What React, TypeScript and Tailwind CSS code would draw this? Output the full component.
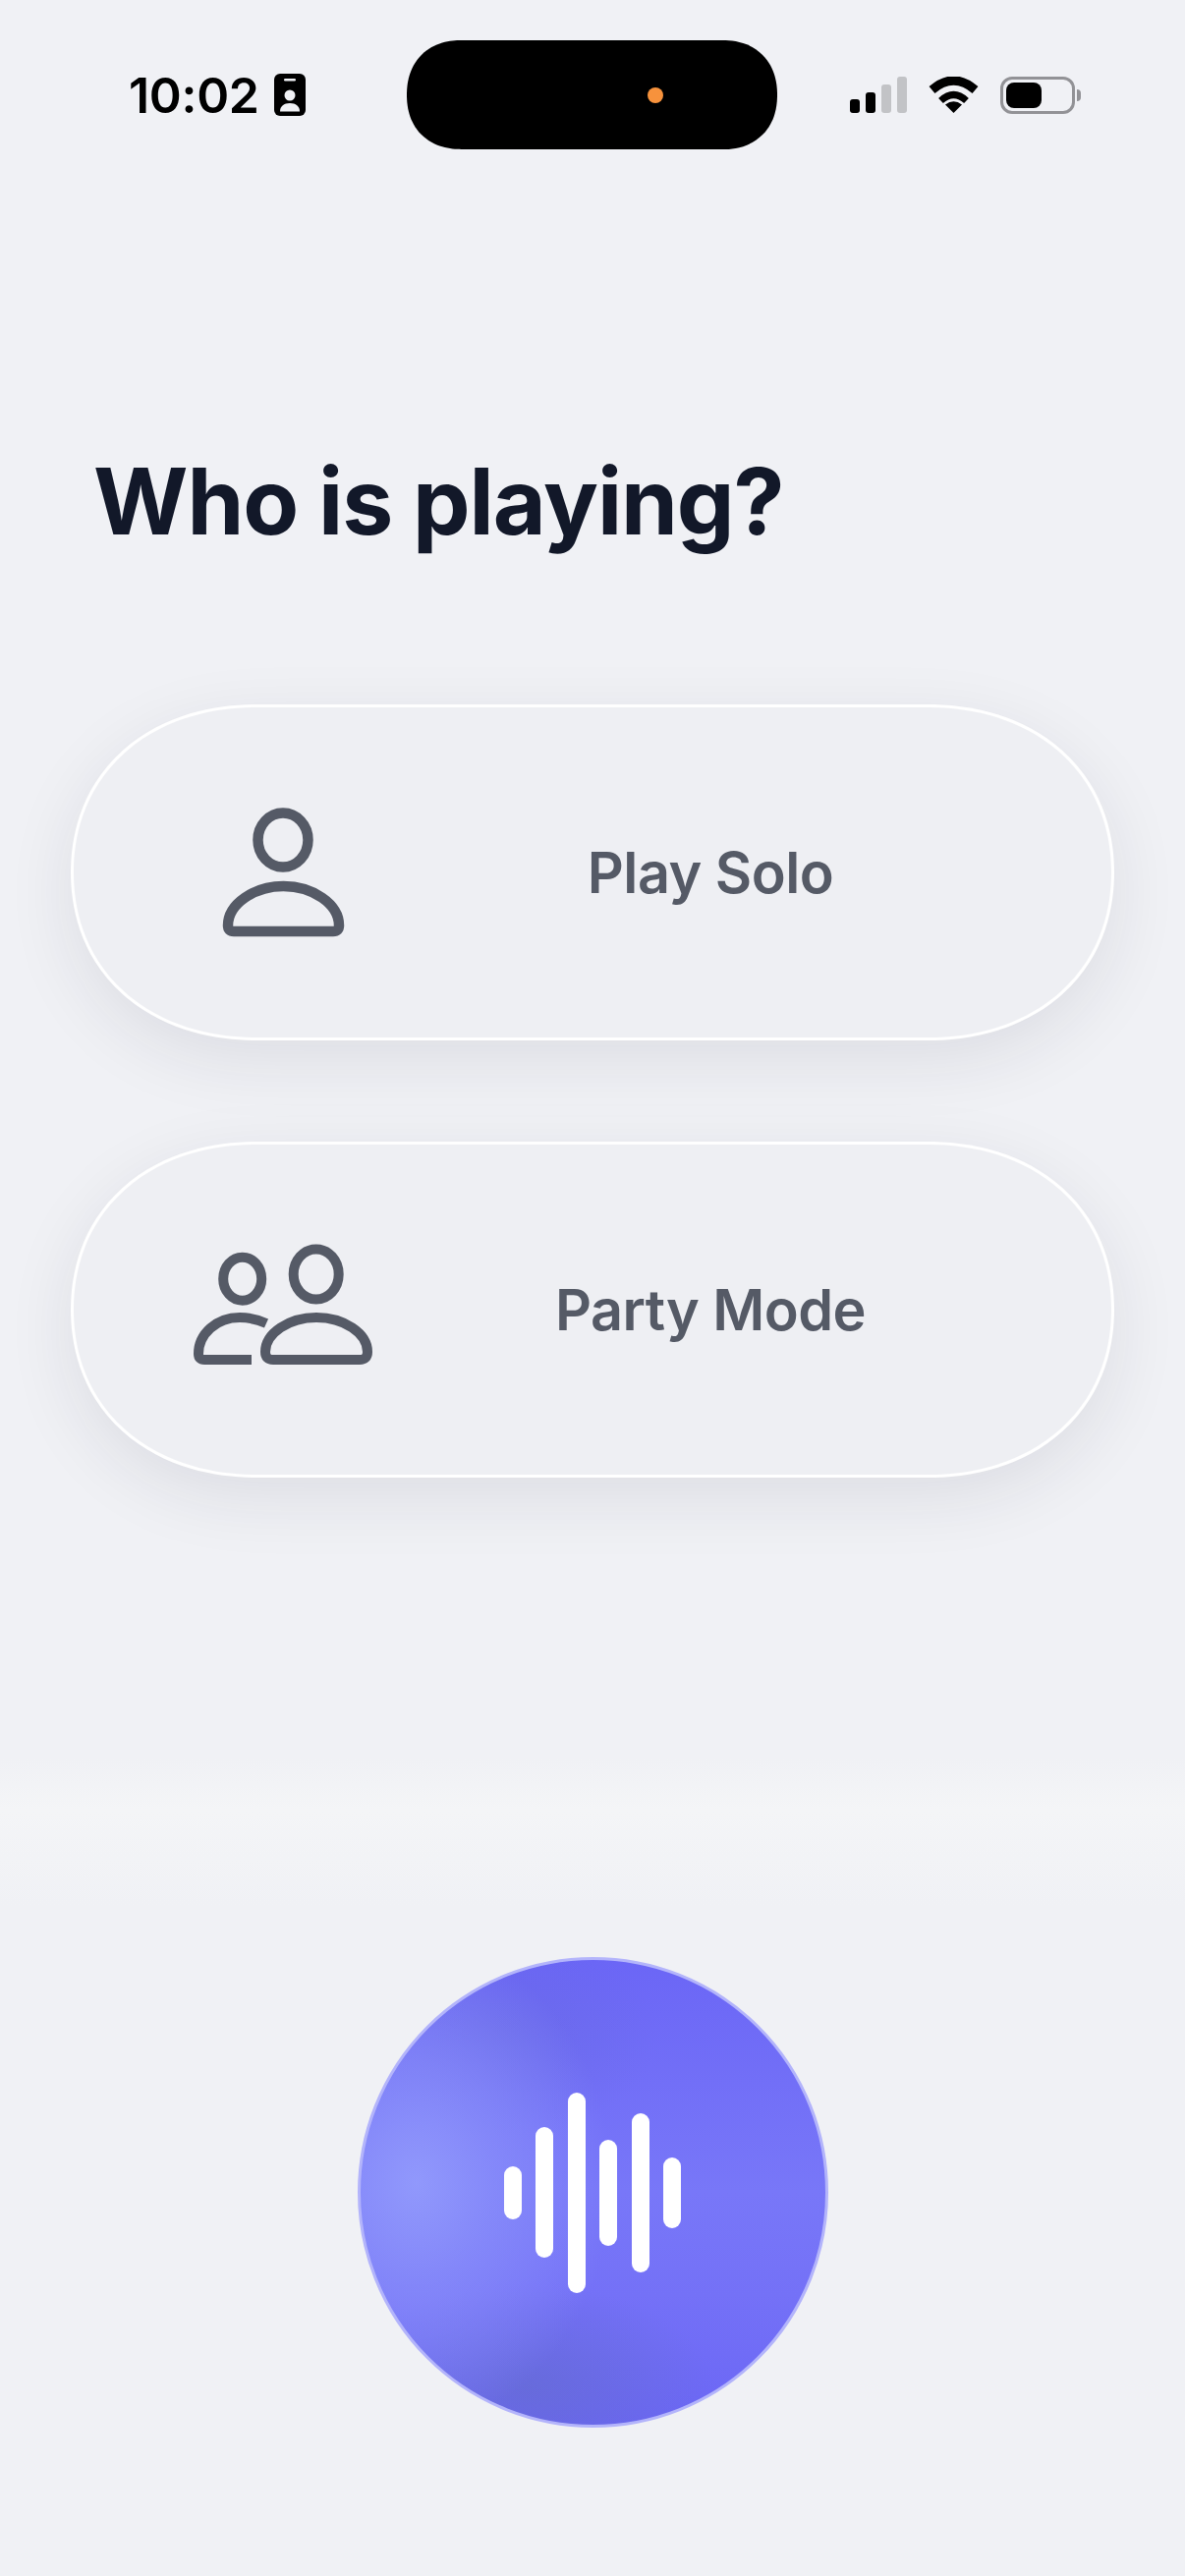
const bars = [54, 133, 204, 108, 162, 72];
const heightClass: Record<number, string> = {
  54: "h-[54px]",
  133: "h-[133px]",
  204: "h-[204px]",
  108: "h-[108px]",
  162: "h-[162px]",
  72: "h-[72px]",
};

function SoloIcon() {
  return (
    <svg width="130" height="140" viewBox="0 0 130 140" fill="none" stroke="#555a66" strokeWidth="10.5" strokeLinejoin="round">
      <ellipse cx="65" cy="37" rx="25.5" ry="27.5" />
      <path d="M15 130H116Q122 130 122 124C122 102 95 84 65.5 84C36 84 9 102 9 124Q9 130 15 130Z" />
    </svg>
  );
}

function PartyIcon() {
  return (
    <svg width="196" height="145" viewBox="0 0 196 145" fill="none" stroke="#555a66" strokeWidth="10" strokeLinejoin="round">
      <ellipse cx="56.7" cy="40.7" rx="19.5" ry="22" />
      <ellipse cx="131.7" cy="36" rx="23" ry="25.5" />
      <path d="M81 86C72 82 64 80 54 80C30 80 12 97 12 117Q12 123 18 123H66" />
      <path d="M88 123H176Q184 123 184 115C184 96 160 80 132 80C104 80 80 96 80 115Q80 123 88 123Z" />
    </svg>
  );
}

function IdBadge() {
  return (
    <svg width="32" height="43" viewBox="0 0 32 43" className="ml-[15px]">
      <rect width="32" height="43" rx="6" fill="#000" />
      <rect x="10" y="5" width="12" height="2.5" rx="1.2" fill="#f0f1f5" />
      <circle cx="16" cy="22" r="5.5" fill="#f0f1f5" />
      <path d="M6 38.5C6 33 10 30 16 30C22 30 26 33 26 38.5Z" fill="#f0f1f5" />
    </svg>
  );
}

function Signal() {
  return (
    <div className="flex items-end gap-[6px] h-[37px]">
      <div className="w-[10px] h-[14px] rounded-[3px] bg-black" />
      <div className="w-[10px] h-[21px] rounded-[3px] bg-black" />
      <div className="w-[10px] h-[29px] rounded-[3px] bg-[#c2c3c6]" />
      <div className="w-[10px] h-[37px] rounded-[3px] bg-[#c2c3c6]" />
    </div>
  );
}

function Wifi() {
  return (
    <svg width="51" height="37" viewBox="0 0 51 37" fill="none" className="ml-[22px]">
      <path d="M3.5 13.5Q25.5 -5.5 47.5 13.5" stroke="#000" strokeWidth="9" />
      <path d="M12.5 24.5Q25.5 12.5 38.5 24.5" stroke="#000" strokeWidth="7" />
      <path d="M25.5 37L17 28.5Q25.5 22 34 28.5Z" fill="#000" />
    </svg>
  );
}

function Battery() {
  return (
    <div className="flex items-center ml-[22px]">
      <div className="w-[76px] h-[38px] rounded-[12px] border-[3px] border-[#929296] p-[3px]">
        <div className="w-[36px] h-full rounded-[8px] bg-black" />
      </div>
      <div className="ml-[2px] w-[4px] h-[12px] rounded-r-[4px] bg-[#929296]" />
    </div>
  );
}

function ModeCard({ icon, label }: { icon: React.ReactNode; label: string }) {
  return (
    <button className="flex items-center w-full h-[342px] px-[93px] rounded-[190px/171px] [corner-shape:superellipse(1.1)] bg-[#eeeff3] border-[3px] border-white/95 shadow-[0_20px_70px_rgba(30,35,60,0.09)]">
      <div className="w-[240px] flex justify-center shrink-0">{icon}</div>
      <span className="flex-1 text-center text-[57.5px] leading-[68px] font-semibold tracking-[-0.5px] text-[#555a66]">{label}</span>
    </button>
  );
}

export default function App() {
  return (
    <div className="relative w-[1206px] h-[2622px] overflow-hidden bg-[#f0f1f5] font-['Inter',sans-serif]">
      <div className="flex items-center pt-[41px] h-[152px]">
        <div className="flex items-center w-[414px] pl-[131px]">
          <span className="text-[50px] leading-[60px] font-semibold text-black tracking-[-0.3px]">10:02</span>
          <IdBadge />
        </div>
        <div className="relative w-[377px] h-[111px] rounded-[55.5px] [corner-shape:superellipse(1.15)] bg-black">
          <div className="absolute left-[245px] top-[48px] w-[16px] h-[16px] rounded-full bg-[#f7923c]" />
        </div>
        <div className="flex items-center pl-[74px]">
          <Signal />
          <Wifi />
          <Battery />
        </div>
      </div>

      <h1 className="mt-[300px] pl-[95px] text-[93px] leading-[116px] font-bold text-[#121829] tracking-[-1.1px]">Who is playing?</h1>

      <div className="mt-[149px] px-[72px] flex flex-col gap-[103px]">
        <ModeCard icon={<SoloIcon />} label="Play Solo" />
        <ModeCard icon={<PartyIcon />} label="Party Mode" />
      </div>

      <div className="mt-[286px] h-[150px] bg-[linear-gradient(180deg,#f0f1f5_0%,#f4f5f7_35%,#f0f1f5_100%)]" />

      <div className="mt-[52px] flex justify-center">
        <button className="flex items-center justify-center gap-[14.5px] w-[479px] h-[479px] rounded-full border-[3px] border-[#b3b4fb] bg-[radial-gradient(ellipse_42%_52%_at_12%_48%,rgba(146,154,252,0.95)_0%,rgba(138,144,250,0.7)_40%,rgba(120,122,248,0)_100%),radial-gradient(ellipse_40%_22%_at_36%_92%,rgba(100,108,205,0.65)_0%,rgba(100,108,205,0)_100%),radial-gradient(ellipse_34%_22%_at_30%_16%,rgba(100,105,215,0.4)_0%,rgba(100,105,215,0)_100%),linear-gradient(180deg,#6b66f6_0%,#7877f8_50%,#7471f7_72%,#6b66f5_100%)]">
          {bars.map((h) => (
            <span key={h} className={`w-[18px] rounded-full bg-white ${heightClass[h]}`} />
          ))}
        </button>
      </div>
    </div>
  );
}
